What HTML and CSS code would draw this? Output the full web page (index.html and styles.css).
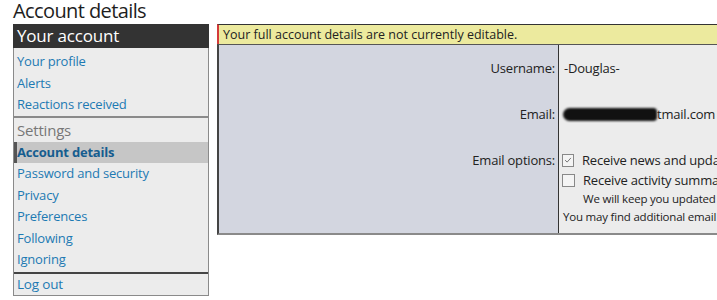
FILE: index.html
```html
<!DOCTYPE html>
<html>
<head>
<meta charset="utf-8">
<link rel="stylesheet" href="styles.css">
</head>
<body>
<div class="page">
  <h1 class="title">Account details</h1>
  <div class="layout">
    <nav class="side">
      <div class="side-head">Your account</div>
      <div class="block first">
        <a class="item">Your profile</a>
        <a class="item">Alerts</a>
        <a class="item">Reactions received</a>
      </div>
      <div class="block sep-light">
        <div class="block-head">Settings</div>
        <a class="item active">Account details</a>
        <a class="item">Password and security</a>
        <a class="item">Privacy</a>
        <a class="item">Preferences</a>
        <a class="item">Following</a>
        <a class="item">Ignoring</a>
      </div>
      <div class="block sep-dark">
        <a class="item">Log out</a>
      </div>
    </nav>
    <main class="main">
      <div class="notice">Your full account details are not currently editable.</div>
      <div class="form">
        <div class="lbl r1">Username:</div>
        <div class="val r1">-Douglas-</div>
        <div class="lbl r2">Email:</div>
        <div class="val r2"><span class="redact"></span>tmail.com</div>
        <div class="lbl r3">Email options:</div>
        <div class="val r3">
          <label class="opt"><span class="cb checked"><svg viewBox="0 0 12 12" width="12" height="12"><path d="M2.5 6.2 L5 8.5 L9.5 3.5" fill="none" stroke="#777" stroke-width="1.2"/></svg></span>Receive news and updates from us via email</label>
          <label class="opt"><span class="cb"></span>Receive activity summary email</label>
          <div class="hint">We will keep you updated with activity on this site while you're away.</div>
          <div class="foot">You may find additional email options under your preferences.</div>
        </div>
      </div>
    </main>
  </div>
</div>
</body>
</html>
```
FILE: styles.css
```css
html, body { margin: 0; padding: 0; background: #fff; overflow: hidden; }
body { font-family: "Open Sans", "Noto Sans", sans-serif; color: #222; width: 717px; height: 300px; }
.page { padding-left: 13px; }
.title { margin: 0; height: 24px; font-size: 20px; font-weight: 400; line-height: 22px; color: #1e1e1e; letter-spacing: -0.6px; }
.layout { display: flex; gap: 8px; align-items: flex-start; }
.side { width: 194px; flex: none; background: #ececec; border: 1px solid #8a8a8a; border-top: none; }
.side-head { background: #333; color: #fff; height: 24px; line-height: 24px; font-size: 17px; margin: 0 -1px; padding-left: 4px; letter-spacing: -0.2px; }
.block.first { padding-top: 3px; }
.sep-light { border-top: 2px solid #8a8a8a; padding-bottom: 1.5px; }
.sep-dark { border-top: 2px solid #444; }
.block-head { height: 24px; line-height: 24px; font-size: 15px; color: #777; padding-left: 3px; letter-spacing: -0.2px; }
.item { display: block; height: 21.5px; line-height: 21.5px; font-size: 13px; color: #1d7ab3; padding-left: 3px; letter-spacing: -0.2px; }
.sep-dark .item { height: 21px; line-height: 21px; font-size: 13.5px; }
.item.active { background: #c6c6c6; font-weight: 700; color: #165d8f; border-left: 3px solid #555; padding-left: 0; }
.main { width: 560px; flex: none; }
.notice { height: 19px; line-height: 19px; background: #ecea9e; border-top: 1px solid #333; border-left: 2px solid #d43a3a; font-size: 12.5px; padding-left: 4px; color: #222; }
.form { display: grid; grid-template-columns: 339px 1fr; border-top: 1px solid #555; border-left: 2px solid #444; border-bottom: 2px solid #8a8a8a; font-size: 13px; letter-spacing: -0.2px; }
.lbl { background: #d3d6e0; text-align: right; padding-right: 3px; line-height: 20px; }
.val { background: #ececec; border-left: 1px solid #333; padding-left: 5px; line-height: 20px; white-space: nowrap; overflow: hidden; }
.r1 { padding-top: 13px; padding-bottom: 14px; }
.r2 { padding-top: 12px; padding-bottom: 14px; }
.r3 { padding-top: 12px; padding-bottom: 8px; }
.redact { display: inline-block; vertical-align: middle; width: 94px; height: 13px; margin: -2px 0 0 -1px; background: #111; border-radius: 7px 4px 4px 7px; filter: blur(0.8px); }
.opt { display: flex; align-items: center; height: 20px; }
.cb { width: 11px; height: 11px; border: 1px solid #888; background: #f4f4f4; margin: 0 8px 0 -2px; display: inline-flex; align-items: center; justify-content: center; }
.cb svg { width: 10px; height: 10px; }
.hint { font-size: 11.5px; line-height: 18px; padding-left: 19px; }
.foot { font-size: 11.5px; line-height: 17px; margin-left: -1px; }
```
